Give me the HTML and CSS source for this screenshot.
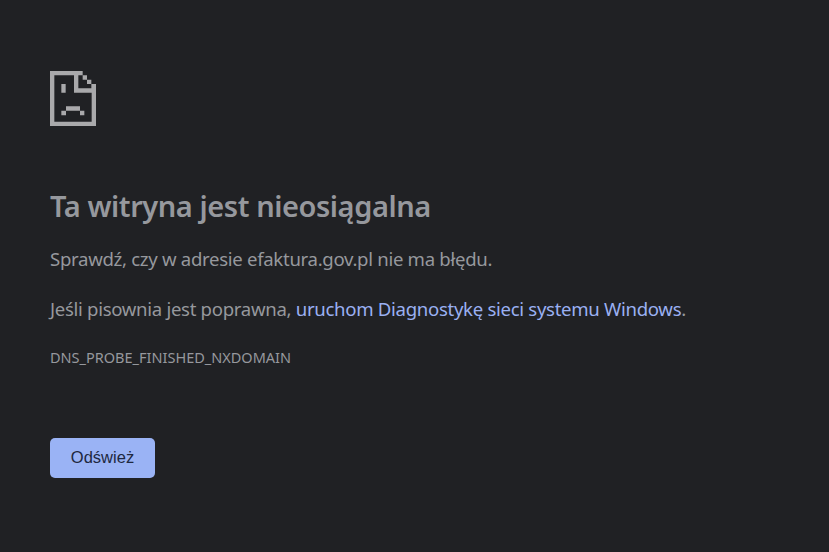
FILE: index.html
```html
<!DOCTYPE html>
<html lang="pl">
<head>
  <meta charset="UTF-8">
  <meta name="viewport" content="width=device-width, initial-scale=1.0">
  <title>efaktura.gov.pl</title>
  <link rel="stylesheet" href="styles.css">
</head>
<body>
  <main class="error-page">
    <svg class="icon" viewBox="0 0 138 165" preserveAspectRatio="none" aria-hidden="true">
      <!-- page outline with the folded corner -->
      <path d="M0 0H98V13H111V26H124V39H138V165H0ZM13 13V152H125V65H72V13ZM85 13V52H124V39H111V26H98V13Z" fill-rule="evenodd"/>
      <!-- eye and mouth -->
      <path d="M34 39H47V65H34ZM48 106H90V119H48ZM34 119H48V133H34ZM90 119H103V133H90Z"/>
    </svg>
    <h1>Ta witryna jest nieosiągalna</h1>
    <p class="summary">Sprawdź, czy w adresie efaktura.gov.pl nie ma błędu.</p>
    <p class="suggestion">Jeśli pisownia jest poprawna, <a href="#">uruchom Diagnostykę sieci systemu Windows</a>.</p>
    <div class="error-code">DNS_PROBE_FINISHED_NXDOMAIN</div>
    <button class="reload" type="button">Odśwież</button>
  </main>
</body>
</html>
```
FILE: styles.css
```css
body {
  margin: 0;
  background: #202124;
  color: #96989d;
  font-family: "Segoe UI", "Noto Sans", sans-serif;
  font-size: 18.6px;
  letter-spacing: -0.31px;
}
.error-page {
  padding: 71px 50px 0;
  white-space: nowrap;
}
.icon {
  display: block;
  width: 46px;
  height: 55px;
  fill: #a9a9ab;
}
h1 {
  margin: 60px 0 0;
  font-size: 29px;
  font-weight: 600;
  letter-spacing: -0.43px;
  line-height: 40px;
}
p {
  margin: 0;
  line-height: 30px;
}
.summary {
  margin-top: 18px;
}
.suggestion {
  margin-top: 20px;
}
a {
  color: #9ab0f2;
  text-decoration: none;
}
.error-code {
  margin-top: 23px;
  font-size: 14.5px;
  letter-spacing: 0;
  line-height: 20px;
}
.reload {
  display: block;
  width: 105px;
  height: 40px;
  margin-top: 71px;
  padding: 0 0 1px;
  border: 0;
  border-radius: 5px;
  background: #9ab3f5;
  color: #202840;
  font-family: "Liberation Sans", Arial, sans-serif;
  font-size: 16.5px;
}
```
